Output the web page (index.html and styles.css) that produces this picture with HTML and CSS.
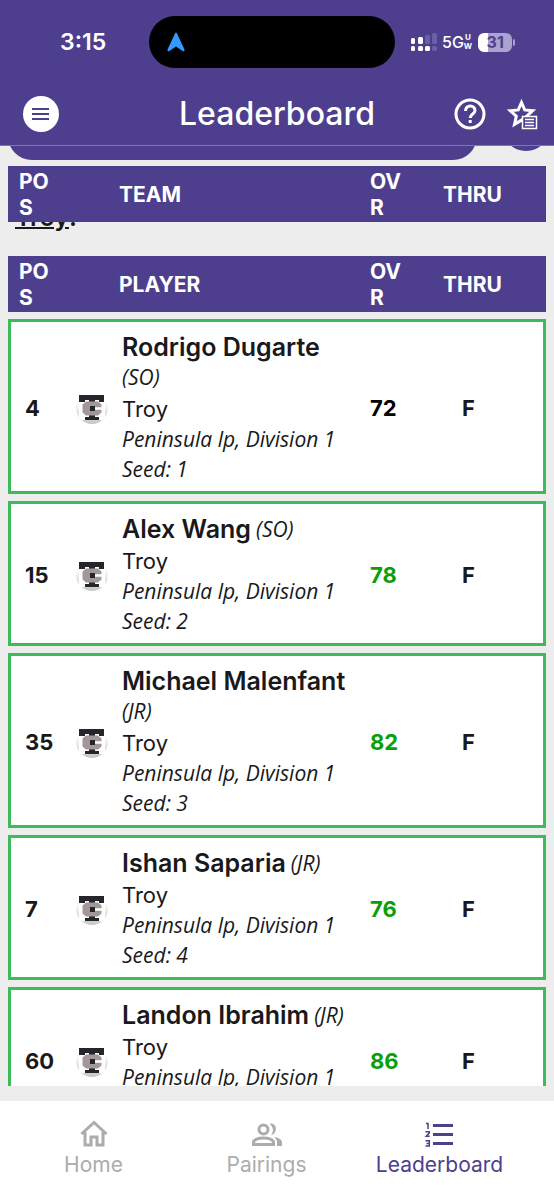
FILE: index.html
```html
<!DOCTYPE html>
<html lang="en">
<head>
    <meta charset="UTF-8">
    <meta name="viewport" content="width=device-width, initial-scale=1.0">
    <title>Leaderboard</title>
    <link rel="stylesheet" href="styles.css">
</head>
<body>
    <svg class="defs" aria-hidden="true">
        <defs>
            <linearGradient id="shade" x1="0" y1="0" x2="0" y2="1">
                <stop offset="0.3" stop-color="#ffffff"/>
                <stop offset="1" stop-color="#c6c6c6"/>
            </linearGradient>
        </defs>
        <symbol id="team-logo" viewBox="0 0 34 34">
            <circle cx="17" cy="17" r="16" fill="url(#shade)"/>
            <path fill="#fff" d="M4 4h26v25H4z"/>
            <path fill="#25262b" d="M4 4h25v7h-5V9h-4v17h4v3H10v-3h4V9h-4v2H4z"/>
            <path fill="#a39797" d="M11 10.500h12l3.500 3v2.800H20v-1.300h-5v5h5v-1.300h6.500v2.800l-3.500 3H11l-3.500-3v-8z"/>
            <path fill="#25262b" d="M15 15h4v5h-4z"/>
        </symbol>
    </svg>

    <header class="header">
        <div class="status">
            <span class="time">3:15</span>
            <div class="island">
                <svg width="20" height="22" viewBox="0 0 20 22"><path d="M9 2.500Q10 .5 11 2.500L18.500 18.500Q19 21 16.500 20L10 15.500 3.500 20Q1 21 1.500 18.500z" fill="#3399ff"/></svg>
            </div>
            <div class="signal">
                <svg width="28" height="20" viewBox="0 0 28 20">
                    <g fill="#fff"><rect x="1" y="6" width="4" height="6" rx="1.500"/><rect x="8" y="5" width="5" height="7" rx="1.500"/><rect x="1" y="14" width="4" height="5" rx="1.500"/><rect x="8" y="14" width="5" height="5" rx="1.500"/><rect x="15" y="14" width="5" height="5" rx="1.500"/></g>
                    <g fill="#6b5fa5"><rect x="15" y="3" width="5" height="9" rx="1.500"/><rect x="22" y="1" width="5" height="11" rx="1.500"/><rect x="22" y="14" width="5" height="5" rx="1.500"/></g>
                </svg>
                <span class="network">5G</span>
                <span class="band"><span>U</span><span>W</span></span>
                <span class="battery">31</span>
            </div>
        </div>
        <div class="toolbar">
            <button class="menu" aria-label="Menu">
                <svg width="20" height="14" viewBox="0 0 20 14"><path d="M1 2h17M1 7h17M1 12h17" stroke="#4d3f8d" stroke-width="2"/></svg>
            </button>
            <h1>Leaderboard</h1>
            <div class="actions">
                <button class="icon" aria-label="Help">
                    <svg width="34" height="34" viewBox="0 0 34 34" fill="none" stroke="#fff" stroke-width="3"><circle cx="17" cy="17" r="14"/><path d="M12.500 14C12.500 7 22 7.500 22 13.500 22 17 17.200 17 17.200 21"/><path d="M17.200 23v3"/></svg>
                </button>
                <button class="icon" aria-label="Favorites">
                    <svg width="34" height="34" viewBox="0 0 34 34"><path d="M16.500 5.500l3.200 7.400 8 .8-6 5.500 1.700 8.200-6.900-4.300-7 4.300 1.800-8.200-6-5.500 8-.8z" fill="none" stroke="#fff" stroke-width="3"/><path d="M17.500 19.500h14v12h-14z" fill="#4d3f8d" stroke="#fff" stroke-width="1.500"/><path d="M20 22.500h9M20 25.500h9M20 28.500h9" stroke="#fff" stroke-width="1.300"/></svg>
                </button>
            </div>
        </div>
    </header>

    <main>
        <div class="filters">
            <button class="filter" aria-label="Select event"></button>
            <button class="refresh" aria-label="Refresh"></button>
        </div>

        <table class="teams">
            <thead>
                <tr><th>POS</th><th>TEAM</th><th>OVR</th><th>THRU</th></tr>
            </thead>
        </table>
        <div class="team-name"><a href="#troy">Troy</a>.</div>

        <table class="players">
            <thead>
                <tr><th>POS</th><th>PLAYER</th><th>OVR</th><th>THRU</th></tr>
            </thead>
            <tbody>
                <tr>
                    <td>4</td>
                    <td><svg class="logo"><use href="#team-logo"/></svg></td>
                    <td class="player">
                        <div class="name"><b>Rodrigo Dugarte</b> <i>(SO)</i></div>
                        <div class="school">Troy</div>
                        <div class="info">Peninsula lp, Division 1</div>
                        <div class="info">Seed: 1</div>
                    </td>
                    <td class="score even">72</td>
                    <td>F</td>
                </tr>
                <tr>
                    <td>15</td>
                    <td><svg class="logo"><use href="#team-logo"/></svg></td>
                    <td class="player">
                        <div class="name"><b>Alex Wang</b> <i>(SO)</i></div>
                        <div class="school">Troy</div>
                        <div class="info">Peninsula lp, Division 1</div>
                        <div class="info">Seed: 2</div>
                    </td>
                    <td class="score">78</td>
                    <td>F</td>
                </tr>
                <tr>
                    <td>35</td>
                    <td><svg class="logo"><use href="#team-logo"/></svg></td>
                    <td class="player">
                        <div class="name"><b>Michael Malenfant</b> <i>(JR)</i></div>
                        <div class="school">Troy</div>
                        <div class="info">Peninsula lp, Division 1</div>
                        <div class="info">Seed: 3</div>
                    </td>
                    <td class="score">82</td>
                    <td>F</td>
                </tr>
                <tr>
                    <td>7</td>
                    <td><svg class="logo"><use href="#team-logo"/></svg></td>
                    <td class="player">
                        <div class="name"><b>Ishan Saparia</b> <i>(JR)</i></div>
                        <div class="school">Troy</div>
                        <div class="info">Peninsula lp, Division 1</div>
                        <div class="info">Seed: 4</div>
                    </td>
                    <td class="score">76</td>
                    <td>F</td>
                </tr>
                <tr>
                    <td>60</td>
                    <td><svg class="logo"><use href="#team-logo"/></svg></td>
                    <td class="player">
                        <div class="name"><b>Landon Ibrahim</b> <i>(JR)</i></div>
                        <div class="school">Troy</div>
                        <div class="info">Peninsula lp, Division 1</div>
                        <div class="info">&nbsp;</div>
                    </td>
                    <td class="score">86</td>
                    <td>F</td>
                </tr>
            </tbody>
        </table>
    </main>

    <nav>
        <a href="#home">
            <svg width="32" height="32" viewBox="0 0 32 32" fill="none" stroke="currentColor" stroke-width="3"><path d="M3.500 16L16 4.500 28.500 16M7 14v13h6v-8h6v8h6V14"/></svg>
            Home
        </a>
        <a href="#pairings">
            <svg width="32" height="32" viewBox="0 0 32 32"><g fill="none" stroke="currentColor" stroke-width="3"><circle cx="12.500" cy="11.500" r="4.500"/><path d="M2.500 26.500v-2c0-6 20-6 20 0v2z"/></g><path fill="currentColor" d="M18.500 5.800c7.500-1.800 9 9.800 1.500 11.400 3-4 2.500-8-1.500-11.400zM23 19c5 .8 8 2.600 8 5.500V28h-5v-3.500c0-2.300-1-4-3-5.500z"/></svg>
            Pairings
        </a>
        <a href="#leaderboard" class="active">
            <svg width="32" height="32" viewBox="0 0 32 32" fill="none" stroke="currentColor"><path stroke-width="3" d="M9 7.500h20M9 16.500h20M9 25.500h20"/><path stroke-width="1.500" d="M2 5.500h2v5.500M1.500 13.800h3.800v1.200l-3 3.200h3.400M1.500 22.800h3.800v5.200H1.500M2.500 25.400h2.800"/></svg>
            Leaderboard
        </a>
    </nav>
</body>
</html>
```
FILE: styles.css
```css
* {
    box-sizing: border-box;
}
body {
    margin: 0;
    height: 100vh;
    display: flex;
    flex-direction: column;
    background: #ededed;
    color: #19191b;
    font-family: Inter, sans-serif;
    font-size: 22px;
}
button {
    padding: 0;
    border: none;
    background: none;
    display: flex;
    align-items: center;
    justify-content: center;
}
.defs {
    position: absolute;
    width: 0;
    height: 0;
}

/* header */
.header {
    background: #4d3f8d;
    color: #fff;
    border-bottom: 1px solid #7f75af;
}
.status {
    height: 84px;
    display: grid;
    grid-template-columns: 1fr 246px 1fr;
    align-items: center;
    padding: 0 10px 0 0;
}
.time {
    padding-left: 60px;
    font-size: 23px;
    font-weight: 600;
}
.island {
    height: 52px;
    border-radius: 26px;
    background: #000;
    display: flex;
    align-items: center;
    padding-left: 17px;
}
.signal {
    display: flex;
    align-items: center;
    padding-left: 15px;
}
.network {
    margin-left: 4px;
    font-size: 16px;
    font-weight: 500;
}
.band {
    display: flex;
    flex-direction: column;
    font-size: 8px;
    line-height: 9px;
    font-weight: 700;
    text-align: center;
}
.battery {
    position: relative;
    width: 34px;
    height: 19px;
    margin-left: 6px;
    border-radius: 6px;
    background: linear-gradient(90deg, #fff 10px, #aaa2cf 10px);
    color: #4d3f8d;
    font-size: 16px;
    line-height: 19px;
    font-weight: 700;
    text-align: center;
}
.battery::after {
    content: "";
    position: absolute;
    right: -3px;
    top: 6px;
    width: 2px;
    height: 7px;
    border-radius: 0 2px 2px 0;
    background: #aaa2cf;
}
.toolbar {
    height: 61px;
    display: grid;
    grid-template-columns: 1fr auto 1fr;
    align-items: center;
    padding: 0 23px 2px;
}
.menu {
    width: 36px;
    height: 36px;
    border-radius: 50%;
    background: #fff;
}
h1 {
    margin: 0;
    font-size: 32px;
    line-height: 40px;
    font-weight: 500;
}
.actions {
    display: flex;
    justify-content: flex-end;
    gap: 18px;
    margin-right: -8px;
}

/* list */
main {
    flex: 1;
    min-height: 0;
    overflow: hidden;
    padding: 0 8px;
    margin-bottom: 15px;
}
.filters {
    height: 14px;
    overflow: hidden;
    display: flex;
    align-items: flex-end;
    justify-content: space-between;
    margin-right: -4px;
}
.filter {
    flex: 1;
    max-width: 469px;
    height: 56px;
    border-radius: 24px;
    background: #4d3f8d;
}
.refresh {
    width: 48px;
    height: 48px;
    margin-bottom: 9px;
    border-radius: 50%;
    background: #4d3f8d;
}
table, thead, tbody {
    display: block;
}
.teams {
    margin-top: 6px;
    position: relative;
    z-index: 1;
}
th, td {
    padding: 0;
    text-align: left;
}
thead tr {
    display: grid;
    grid-template-columns: 100px 1fr 73px 92px;
    align-items: center;
    height: 56px;
    padding: 2px 11px 0;
    background: #4d3f8d;
    color: #fff;
    line-height: 26px;
}
th {
    font-size: 21px;
    font-weight: 700;
}
th:first-child, th:nth-child(3) {
    width: 34px;
    word-break: break-all;
}
.team-name {
    height: 34px;
    display: flex;
    align-items: flex-end;
    padding: 0 7px 23px;
    font-size: 25px;
    line-height: 32px;
    font-weight: 600;
}
.team-name a {
    color: inherit;
    text-decoration-thickness: 2px;
}
tbody tr {
    display: grid;
    grid-template-columns: 50px 47px 1fr 73px 92px;
    align-items: center;
    margin-top: 7px;
    padding: 10px 8px 7px 14px;
    border: 3px solid #3bbb59;
    background: #fff;
}
td {
    font-weight: 700;
    line-height: 30px;
}
td:last-child {
    padding-left: 19px;
}
.logo {
    display: block;
    width: 34px;
    height: 34px;
}
.player {
    padding-right: 12px;
    font-weight: 400;
}
.name {
    display: flex;
    flex-wrap: wrap;
    align-items: center;
    column-gap: 5px;
    margin-bottom: 2px;
}
.name b {
    font-size: 25px;
    font-weight: 600;
}
i, .info {
    font-family: "Open Sans", sans-serif;
    font-style: italic;
    font-size: 21px;
}
.score {
    color: #08a008;
}
.even {
    color: #000;
}

/* bottom tabs */
nav {
    height: 99px;
    display: flex;
    padding: 17px 28px 0 7px;
    background: #fff;
}
nav a {
    flex: 1;
    display: flex;
    flex-direction: column;
    align-items: center;
    color: #acacae;
    text-decoration: none;
    font-size: 21px;
    line-height: 30px;
}
nav .active {
    color: #4d3f8d;
}
```
